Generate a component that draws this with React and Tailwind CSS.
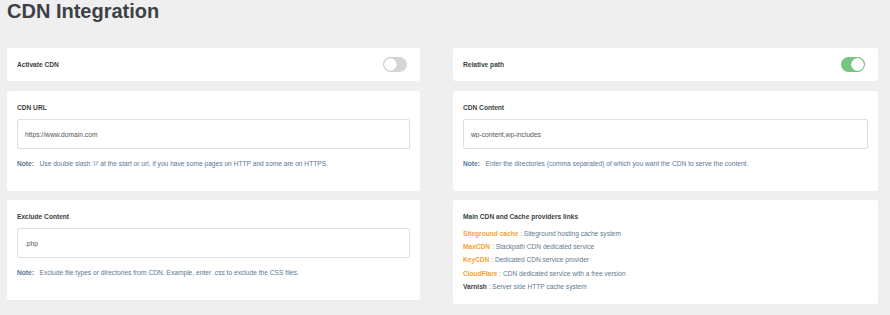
const font = "font-['Liberation_Sans',Arial,sans-serif]";

function Toggle({ on }) {
  return (
    <span
      className={
        "inline-flex items-center w-[24px] h-[15px] rounded-full p-[1px] " +
        (on ? "justify-end bg-[#74c87e]" : "justify-start bg-[#d5d5d5]")
      }
    >
      <span className="w-[13px] h-[13px] rounded-full bg-white shadow-[0_0_1px_rgba(0,0,0,0.35)]" />
    </span>
  );
}

function SwitchCard({ label, on }) {
  return (
    <div className="h-[33px] flex items-center justify-between pl-[10px] pr-[13px] rounded-[3px] bg-white">
      <span className="text-[6.6px] leading-[8px] font-bold text-[#3a3f44]">{label}</span>
      <Toggle on={on} />
    </div>
  );
}

function FieldCard({ label, value, note, className = "" }) {
  return (
    <div className={"rounded-[3px] bg-white px-[10px] pt-[13px] pb-[23px] " + className}>
      <div className="text-[6.6px] leading-[8px] font-bold text-[#3a3f44]">{label}</div>
      <input
        readOnly
        defaultValue={value}
        className="mt-[7px] block w-full h-[30px] rounded-[2px] border border-[#dedede] bg-white px-[7px] text-[6.7px] text-[#555] outline-none"
      />
      <div className="mt-[11px] text-[6.65px] leading-[8px] text-[#5a7893] whitespace-nowrap">
        <span className="font-bold">Note:</span>
        {"\u00a0\u00a0 "}
        {note}
      </div>
    </div>
  );
}

const providers = [
  { name: "Siteground cache", desc: "Siteground hosting cache system", color: "text-[#f5a431]" },
  { name: "MaxCDN", desc: "Stackpath CDN dedicated service", color: "text-[#f5a431]" },
  { name: "KeyCDN", desc: "Dedicated CDN service provider", color: "text-[#f5a431]" },
  { name: "CloudFlare", desc: "CDN dedicated service with a free version", color: "text-[#f5a431]" },
  { name: "Varnish", desc: "Server side HTTP cache system", color: "text-[#3f4246]" },
];

export default function App() {
  return (
    <div className={"min-h-screen bg-[#efefef] pl-[7px] " + font}>
      <h1 className="text-[20px] leading-[23px] font-bold text-[#3c4146]">CDN Integration</h1>
      <div className="mt-[25px] flex gap-[33px]">
        {/* left column */}
        <div className="w-[413px] flex flex-col">
          <SwitchCard label="Activate CDN" on={false} />
          <FieldCard
            className="mt-[10px]"
            label="CDN URL"
            value="https://www.domain.com"
            note="Use double slash '//' at the start or url, if you have some pages on HTTP and some are on HTTPS."
          />
          <FieldCard
            className="mt-[9px]"
            label="Exclude Content"
            value=".php"
            note="Exclude file types or directories from CDN. Example, enter .css to exclude the CSS files."
          />
        </div>
        {/* right column */}
        <div className="w-[425px] flex flex-col">
          <SwitchCard label="Relative path" on={true} />
          <FieldCard
            className="mt-[10px]"
            label="CDN Content"
            value="wp-content,wp-includes"
            note="Enter the directories (comma separated) of which you want the CDN to serve the content."
          />
          <div className="mt-[9px] rounded-[3px] bg-white px-[10px] pt-[13px] pb-[10px]">
            <div className="text-[6.6px] leading-[8px] font-bold text-[#3a3f44]">
              Main CDN and Cache providers links
            </div>
            <div className="mt-[5.6px]">
              {providers.map((p) => (
                <div key={p.name} className="text-[6.6px] leading-[13.4px] text-[#62798e]">
                  <span className={"font-bold " + p.color}>{p.name}</span> : {p.desc}
                </div>
              ))}
            </div>
          </div>
        </div>
      </div>
    </div>
  );
}
